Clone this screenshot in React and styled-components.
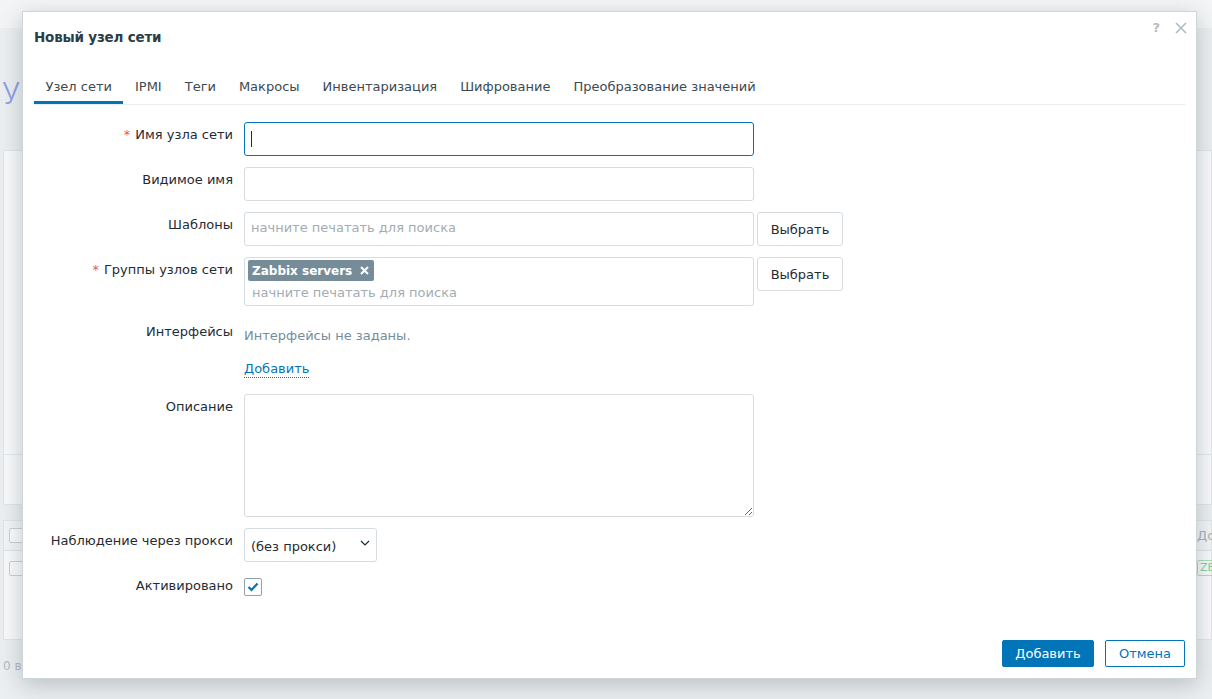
import React from "react";
import styled, { createGlobalStyle } from "styled-components";

const GlobalStyle = createGlobalStyle`
  html, body {
    margin: 0;
    padding: 0;
    height: 100%;
    overflow: hidden;
  }
  body {
    font-family: "DejaVu Sans", "Noto Sans", sans-serif;
    font-size: 13px;
    color: #1f2c33;
    background: #eceff1;
  }
  * { box-sizing: border-box; }
`;

/* ---------- dimmed page behind the dialog ---------- */

const Page = styled.div`
  height: 699px;
  display: flex;
  flex-direction: column;
  background: #eceff1;
  overflow: hidden;
`;

const TopBar = styled.div`
  height: 28px;
  flex-shrink: 0;
  background: #f4f5f6;
`;

const PageHead = styled.h1`
  margin: 0;
  height: 122px;
  flex-shrink: 0;
  display: flex;
  align-items: center;
  padding: 8px 0 0 2px;
  font: 300 30px "Inter", sans-serif;
  letter-spacing: 5px;
  color: #8d9fe6;
  white-space: nowrap;
`;

const FilterBox = styled.div`
  margin-left: 3px;
  height: 355px;
  flex-shrink: 0;
  display: flex;
  flex-direction: column;
  background: #f8f9fa;
  border: 1px solid #e1e5e7;
`;

const FilterBody = styled.div`
  flex: 1;
`;

const FilterActions = styled.div`
  height: 50px;
  border-top: 1px solid #e4e8ea;
`;

const HostTable = styled.div`
  margin: 15px 0 0 3px;
  height: 120px;
  flex-shrink: 0;
  background: #f8f9fa;
  border: 1px solid #e1e5e7;
`;

const TableRow = styled.div`
  height: ${(p) => (p.$head ? 30 : 34)}px;
  display: grid;
  grid-template-columns: 1193px 1fr;
  align-items: center;
  border-bottom: ${(p) => (p.$head ? "1px solid #dfe3e6" : "none")};
  background: ${(p) => (p.$head ? "#f3f5f6" : "transparent")};
  color: #a3afb6;
`;

const RowCheck = styled.span`
  display: block;
  width: 15px;
  height: 15px;
  margin-left: 5px;
  border: 1px solid #c9d1d5;
  border-radius: 2px;
  background: #fbfbfc;
`;

const CellText = styled.span`
  white-space: nowrap;
  font-size: 13px;
  color: #a9b3b9;
`;

const AvailTag = styled.span`
  justify-self: start;
  padding: 0 2px;
  font-size: 11px;
  color: #7fcf9e;
  border: 1px solid #a9dfbd;
  border-radius: 2px;
  line-height: 14px;
`;

const PageFooter = styled.div`
  margin: 19px 0 0 3px;
  font-size: 12px;
  color: #b1bcc2;
  white-space: nowrap;
`;

/* ---------- dialog ---------- */

const Dialog = styled.div`
  position: absolute;
  left: 22px;
  top: 11px;
  width: 1175px;
  height: 668px;
  display: flex;
  flex-direction: column;
  padding: 0 11px 11px 11px;
  background: #ffffff;
  border: 1px solid #cdd5d9;
  box-shadow: 0 6px 22px rgba(50, 70, 80, 0.28);
`;

const DialogHead = styled.div`
  height: 49px;
  display: flex;
  align-items: center;
`;

const DialogTitle = styled.h4`
  margin: 0;
  font-size: 13.5px;
  font-weight: 700;
  letter-spacing: -0.2px;
  color: #2b3d47;
`;

const HeadTools = styled.div`
  margin-left: auto;
  align-self: flex-start;
  margin-top: 9px;
  margin-right: -3px;
  display: flex;
  align-items: center;
  gap: 14px;
`;

const HelpMark = styled.span`
  font: 700 13px "DejaVu Sans", sans-serif;
  color: #b3c0c6;
  line-height: 14px;
`;

const CloseBtn = styled.button`
  width: 14px;
  height: 14px;
  padding: 0;
  border: 0;
  background: none;
  display: flex;
  align-items: center;
  justify-content: center;
`;

const TabList = styled.div`
  display: flex;
  border-bottom: 1px solid #ebeef0;
`;

const Tab = styled.div`
  padding: 17px 11.5px 5px;
  line-height: 18px;
  font-size: 13px;
  color: #3c4a52;
  white-space: nowrap;
  border-bottom: 3px solid ${(p) => (p.$active ? "#0275b8" : "transparent")};
`;

const Form = styled.div`
  padding-top: 17px;
  display: grid;
  grid-template-columns: 199px 1fr;
  column-gap: 11px;
  row-gap: 11px;
`;

const Label = styled.label`
  text-align: right;
  line-height: 18px;
  padding-top: ${(p) => p.$top ?? 4}px;
  color: #1f2c33;
  white-space: nowrap;
`;

const Req = styled.span`
  color: #e45959;
  margin-right: 5px;
`;

const Field = styled.div`
  display: flex;
  align-items: flex-start;
  gap: 3px;
`;

const InputWrap = styled.div`
  position: relative;
`;

const TextInput = styled.input`
  width: 510px;
  height: 34px;
  padding: 0 6px 3px;
  border: 1px solid ${(p) => (p.$focused ? "#0275b8" : "#d6dce0")};
  border-radius: 3px;
  background: #fff;
  font: inherit;
  color: #1f2c33;
  outline: none;
  &::placeholder {
    color: #a2adb3;
  }
`;

const Caret = styled.span`
  position: absolute;
  left: 7px;
  top: 9px;
  width: 1px;
  height: 16px;
  background: #1f2c33;
`;

const PickButton = styled.button`
  width: 86px;
  height: 34px;
  border: 1px solid #d6dce0;
  border-radius: 3px;
  background: #fff;
  font: inherit;
  color: #1f2c33;
  cursor: pointer;
`;

const MultiSelect = styled.div`
  width: 510px;
  height: 49px;
  padding: 2px 3px;
  border: 1px solid #d6dce0;
  border-radius: 3px;
  display: flex;
  flex-direction: column;
  align-items: flex-start;
`;

const Chip = styled.span`
  height: 21px;
  display: inline-flex;
  align-items: center;
  gap: 8px;
  padding: 0 5px 0 4px;
  border-radius: 2px;
  background: #768d99;
  color: #fff;
  font-size: 12px;
  font-weight: 700;
  white-space: nowrap;
`;

const MultiPlaceholder = styled.span`
  margin-top: 3px;
  padding-left: 4px;
  line-height: 18px;
  color: #a2adb3;
`;

const Interfaces = styled.div`
  padding: 10px 0 5px;
  display: flex;
  flex-direction: column;
  align-items: flex-start;
  gap: 15px;
  line-height: 18px;
`;

const Muted = styled.span`
  color: #768d99;
`;

const DottedLink = styled.a`
  color: #0275b8;
  text-decoration: none;
  border-bottom: 1px dotted #0275b8;
  line-height: 17px;
  cursor: pointer;
`;

const TextArea = styled.textarea`
  width: 510px;
  height: 123px;
  padding: 4px 6px;
  border: 1px solid #d6dce0;
  border-radius: 3px;
  font: inherit;
  color: #1f2c33;
  outline: none;
  resize: both;
`;

const SelectBox = styled.div`
  width: 133px;
  height: 34px;
  padding: 2px 6px 0;
  border: 1px solid #d6dce0;
  border-radius: 3px;
  display: flex;
  align-items: center;
  justify-content: space-between;
  color: #1f2c33;
  white-space: nowrap;
  svg {
    margin-top: -6px;
  }
`;

const CheckBox = styled.span`
  margin-top: 5px;
  width: 18px;
  height: 18px;
  border: 1px solid #8fa2ad;
  border-radius: 2px;
  display: flex;
  align-items: center;
  justify-content: center;
  background: #fff;
`;

const Footer = styled.div`
  margin-top: auto;
  display: flex;
  justify-content: flex-end;
  gap: 11px;
`;

const FooterButton = styled.button`
  height: 27px;
  min-width: ${(p) => (p.$primary ? 92 : 80)}px;
  padding: 0 10px;
  border: 1px solid #0275b8;
  border-radius: 2px;
  background: ${(p) => (p.$primary ? "#0275b8" : "#fff")};
  color: ${(p) => (p.$primary ? "#fff" : "#0275b8")};
  font: inherit;
  cursor: pointer;
`;

const tabs = [
  "Узел сети",
  "IPMI",
  "Теги",
  "Макросы",
  "Инвентаризация",
  "Шифрование",
  "Преобразование значений",
];

export default function App() {
  return (
    <>
      <GlobalStyle />
      <Page>
        <TopBar />
        <PageHead>Узлы сети</PageHead>
        <FilterBox>
          <FilterBody />
          <FilterActions />
        </FilterBox>
        <HostTable>
          <TableRow $head>
            <RowCheck />
            <CellText>Доступность</CellText>
          </TableRow>
          <TableRow>
            <RowCheck />
            <AvailTag>ZBX</AvailTag>
          </TableRow>
        </HostTable>
        <PageFooter>0 выбрано</PageFooter>
      </Page>

      <Dialog role="dialog">
        <DialogHead>
          <DialogTitle>Новый узел сети</DialogTitle>
          <HeadTools>
            <HelpMark>?</HelpMark>
            <CloseBtn aria-label="Закрыть">
              <svg width="12" height="12" viewBox="0 0 12 12">
                <path
                  d="M1 1 L11 11 M11 1 L1 11"
                  stroke="#aebbc1"
                  strokeWidth="1.6"
                  fill="none"
                />
              </svg>
            </CloseBtn>
          </HeadTools>
        </DialogHead>

        <TabList>
          {tabs.map((t, i) => (
            <Tab key={t} $active={i === 0}>
              {t}
            </Tab>
          ))}
        </TabList>

        <Form>
          <Label>
            <Req>*</Req>Имя узла сети
          </Label>
          <Field>
            <InputWrap>
              <TextInput $focused />
              <Caret />
            </InputWrap>
          </Field>

          <Label>Видимое имя</Label>
          <Field>
            <TextInput />
          </Field>

          <Label>Шаблоны</Label>
          <Field>
            <TextInput placeholder="начните печатать для поиска" />
            <PickButton>Выбрать</PickButton>
          </Field>

          <Label>
            <Req>*</Req>Группы узлов сети
          </Label>
          <Field>
            <MultiSelect>
              <Chip>
                Zabbix servers
                <svg width="9" height="9" viewBox="0 0 9 9">
                  <path
                    d="M1 1 L8 8 M8 1 L1 8"
                    stroke="#ffffff"
                    strokeWidth="2"
                    fill="none"
                  />
                </svg>
              </Chip>
              <MultiPlaceholder>начните печатать для поиска</MultiPlaceholder>
            </MultiSelect>
            <PickButton>Выбрать</PickButton>
          </Field>

          <Label $top={6}>Интерфейсы</Label>
          <Interfaces>
            <Muted>Интерфейсы не заданы.</Muted>
            <DottedLink>Добавить</DottedLink>
          </Interfaces>

          <Label>Описание</Label>
          <Field>
            <TextArea />
          </Field>

          <Label>Наблюдение через прокси</Label>
          <Field>
            <SelectBox>
              <span>(без прокси)</span>
              <svg width="10" height="6" viewBox="0 0 10 6">
                <path
                  d="M1 1 L5 5 L9 1"
                  stroke="#1f2c33"
                  strokeWidth="1.2"
                  fill="none"
                />
              </svg>
            </SelectBox>
          </Field>

          <Label>Активировано</Label>
          <Field>
            <CheckBox>
              <svg width="12" height="10" viewBox="0 0 12 10">
                <path
                  d="M1.5 5 L4.5 8 L10.5 1.5"
                  stroke="#0275b8"
                  strokeWidth="2.2"
                  fill="none"
                />
              </svg>
            </CheckBox>
          </Field>
        </Form>

        <Footer>
          <FooterButton $primary>Добавить</FooterButton>
          <FooterButton>Отмена</FooterButton>
        </Footer>
      </Dialog>
    </>
  );
}
